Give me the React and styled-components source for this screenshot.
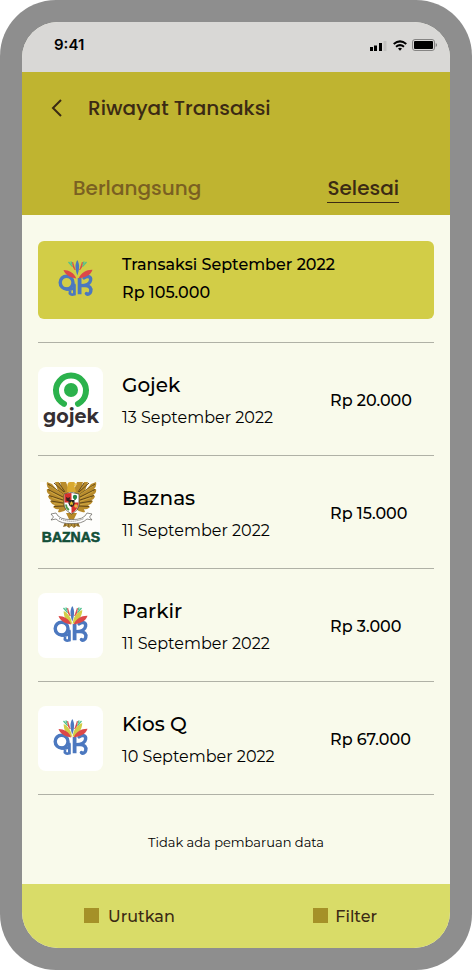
import React, { useState } from "react";
import styled, { createGlobalStyle } from "styled-components";

const GlobalStyle = createGlobalStyle`
  *, *::before, *::after { box-sizing: border-box; }
  body { margin: 0; background: #fff; }
  button { font: inherit; color: inherit; background: none; border: 0; padding: 0; cursor: pointer; }
  h1, h2, p, ul { margin: 0; padding: 0; font-weight: inherit; }
  h1 { font-size: inherit; }
`;

const Device = styled.div`
  display: flex;
  min-height: 100vh;
  padding: 22px;
  border-radius: 56px;
  background: #8e8e8e;
  font-family: Montserrat, Inter, sans-serif;
  color: #000;
`;

const Screen = styled.main`
  flex: 1;
  min-width: 0;
  display: flex;
  flex-direction: column;
  overflow: hidden;
  border-radius: 36px;
  background: #f9faeb;
`;

const StatusBar = styled.div`
  display: flex;
  align-items: center;
  justify-content: space-between;
  height: 50px;
  padding: 0 12px 4px 32px;
  background: #d9d8d6;
`;

const Clock = styled.time`
  font: 600 15px/20px Inter, sans-serif;
`;

const StatusIcons = styled.svg`
  display: block;
  width: 68px;
  height: 14px;
`;

const Header = styled.header`
  display: flex;
  flex-direction: column;
  justify-content: space-between;
  height: 143px;
  padding: 22px 28px 12px;
  background: #bfb430;
  color: #3b2a14;
  font: 500 20px/28px Poppins, Inter, sans-serif;
`;

const TitleRow = styled.div`
  display: flex;
  align-items: center;
  gap: 24px;
`;

const BackButton = styled.button`
  display: grid;
  place-items: center start;
  width: 14px;
  height: 28px;
`;

const Tabs = styled.div`
  display: flex;
  justify-content: space-between;
  padding: 0 23px;
`;

const Tab = styled.button`
  height: 29px;
  border-bottom: 1px solid ${(p) => (p["aria-selected"] ? "#3b2a14" : "transparent")};
  color: ${(p) => (p["aria-selected"] ? "#3b2a14" : "#7a6022")};
`;

const Content = styled.section`
  flex: 1;
  display: flex;
  flex-direction: column;
  padding: 26px 16px 0;
`;

const Summary = styled.section`
  display: flex;
  align-items: center;
  gap: 14px;
  height: 78px;
  padding: 0 5px 2px;
  margin-bottom: 23px;
  border-radius: 6px;
  background: #d2cd47;
  font-size: 16px;
  font-weight: 500;
  line-height: 28px;
`;

const List = styled.ul`
  list-style: none;
  border-top: 1px solid #b0b1a6;
`;

const Row = styled.li`
  display: flex;
  align-items: center;
  padding: 24px 0 23px;
  border-bottom: 1px solid #b0b1a6;
`;

const Logo = styled.svg`
  display: block;
  flex: none;
  width: 65px;
  height: 65px;
  border-radius: 8px;
  background: ${(p) => p.$fill || "transparent"};
`;

const Details = styled.div`
  flex: 1;
  align-self: flex-start;
  display: flex;
  flex-direction: column;
  gap: 7px;
  min-width: 0;
  margin-left: 19px;
  padding-top: 4px;
`;

const Name = styled.h2`
  font-size: 20px;
  font-weight: 500;
  line-height: 28px;
`;

const DateText = styled.p`
  font-size: 16px;
  font-weight: 400;
  line-height: 24px;
`;

const Amount = styled.p`
  width: 104px;
  padding-top: 2px;
  font-size: 16px;
  font-weight: 500;
  line-height: 24px;
  white-space: nowrap;
`;

const Note = styled.p`
  flex: 1;
  display: grid;
  place-items: center;
  padding: 4px 0 0;
  font-size: 13px;
  line-height: 20px;
`;

const Footer = styled.footer`
  display: flex;
  align-items: center;
  justify-content: space-between;
  height: 64px;
  padding: 2px 73px 0 62px;
  background: #d9dc68;
  color: #3b2a14;
`;

const FooterButton = styled.button`
  display: flex;
  align-items: center;
  gap: ${(p) => p.$gap}px;
  font-size: 16px;
  font-weight: 500;
  line-height: 24px;
`;

const Square = styled.span`
  width: 15px;
  height: 15px;
  margin-bottom: 3px;
  background: #a59128;
`;

function QrLogo({ fill }) {
  return (
    <Logo viewBox="0 0 65 65" $fill={fill} aria-hidden="true">
      <g fill="none" stroke="#4c78bf" strokeWidth="3.4" strokeLinecap="round">
        <circle cx="23.6" cy="35.6" r="6.4" />
        <path d="M22 41.500 Q26 43.500 29 42 M31.400 38 V47.200 C28 48.300 26.300 46.800 27 44.800" strokeWidth="2.8" />
        <path d="M36.600 31 V47.300" strokeLinecap="butt" strokeWidth="3.8" />
        <path d="M41 31 C44 28.500 48.300 29.300 47.600 33.200 C47 36.600 44 38.600 38 38.600 H42 C46.500 38.600 48.600 41 47.700 44.500 C47.100 47 44.800 48 43.400 46.500" />
      </g>
      <path d="M34.3 13 C36.8 17 36.6 22 34.3 28.6 C32 22 31.8 17 34.3 13Z" fill="#4c78bf" />
      <path d="M34 31 C28 29 25.5 23.5 25.7 18 C30.5 20.5 33.5 25 34 31Z" fill="#d2cd47" />
      <path d="M34.6 31 C35 25 38 19.5 44.3 17 C44 23.5 40.5 28.5 34.6 31Z" fill="#d2cd47" />
      <path d="M33.3 31.4 C27 31 22.2 27.5 20.5 23 C26 23 31 26 33.3 31.4Z" fill="#dc4848" />
      <path d="M35.5 31.4 C38 26 43.5 22.6 49.5 22.8 C48 28 42 31 35.5 31.4Z" fill="#dc4848" />
      <path d="M29.6 15 L32.2 23 Q29 20 29.6 15Z M39.4 15 L36.6 23 Q40 20 39.4 15Z" fill="#dc4848" stroke="#dc4848" strokeWidth=".6" />
      <path d="M25.5 15 L29.6 19.6 M43.5 15 L39.4 19.6 M27.8 14.4 L29 17 M41.2 14.4 L40 17" stroke="#4fc08d" strokeWidth="1.3" />
    </Logo>
  );
}

function GojekLogo() {
  return (
    <Logo viewBox="0 0 65 65" $fill="#fff" role="img" aria-label="Gojek">
      <path d="M26 36.800 A15 15 0 1 1 40 36.800" fill="none" stroke="#2bb24c" strokeWidth="6" strokeLinecap="round" />
      <circle cx="33" cy="23" r="7" fill="#2bb24c" />
      <text x="33" y="56" textAnchor="middle" fontFamily="Montserrat, Inter, sans-serif" fontWeight="700" fontSize="19" fill="#352f33">gojek</text>
    </Logo>
  );
}

function Wing() {
  return (
    <g>
      <path
        d="M31 10 L28 2 H22 L24 9 L21 2 H17 L20 11 L14 4 L9 2 Q8 6 11 9 L9 9 Q8 13 12 15 L10 16 Q11 20 14 20 L12 21 Q14 25 17 25 L15 27 Q18 30 21 29 L20 32 Q25 33 29 29 Z"
        fill="#b98c2c"
      />
      <path
        d="M10 4 L25 14 M10 9.500 L25 17 M11 15.500 L25 20 M13 21 L25 23 M16 26.500 L26 26 M16 3 L26 12 M21 3 L27 12"
        stroke="#62481a"
        strokeWidth="1"
      />
      <path d="M12 6 L26 15 M12 11.500 L25 18.500 M14 17.500 L25 21.500 M16 23.500 L25 24.700" stroke="#dfba52" strokeWidth=".6" />
    </g>
  );
}

function BaznasLogo() {
  return (
    <Logo viewBox="0 0 65 65" role="img" aria-label="Baznas">
      <rect x="2" y="2" width="60" height="60" fill="#fefefc" />
      <Wing />
      <g transform="matrix(-1 0 0 1 67 0)"><Wing /></g>
      <path d="M29 12 L29.500 4 Q30 2 32 2 H36 Q38 3 38 5 L36.500 6 L38 12 Z" fill="#d9a92f" />
      <path d="M36 3.500 L39.500 4.500 L37 6 Z" fill="#f1cf54" />
      <path d="M28 33 L31 39 L29 47 L33.500 44 L38 47 L36 39 L39 33 Z" fill="#b78927" />
      <path d="M27 42 L25 47 L29 46 L31 48 L33.500 46 L36 48 L38 46 L42 47 L40 42 Z" fill="#8b6923" />
      <path d="M29 42 V46 M32 42 V47 M35 42 V47 M38 42 V46" stroke="#f0cf6b" strokeWidth=".7" />
      <path d="M26 14 Q33.500 11 41 14 V24 Q41 30 33.500 34 Q26 30 26 24 Z" fill="#fff" stroke="#393321" strokeWidth=".7" />
      <path d="M26.500 14.300 Q30 13 33.500 13 V22.500 H26.500 Z" fill="#d62f2b" />
      <path d="M33.500 22.500 H40.500 V24 Q40.500 29 33.500 33.500 Z" fill="#d62f2b" />
      <path d="M28 17 L30 18 L32 17 L31.500 21 H28.500 Z" fill="#3a2020" />
      <path d="M37 20 V17" stroke="#31613c" strokeWidth="1.500" />
      <circle cx="37" cy="17" r="2.200" fill="#258547" />
      <path d="M28 24.500 Q28 28 31 30" stroke="#4b984c" strokeWidth="1.800" fill="none" />
      <circle cx="38" cy="26" r="1.800" fill="#e8b447" />
      <path d="M30.500 20 H36.500 V23.500 Q36 26 33.500 27 Q31 26 30.500 23.500 Z" fill="#252323" />
      <path d="M33.500 21 L34.200 22.600 L36 22.700 L34.600 23.800 L35.100 25.500 L33.500 24.500 L31.900 25.500 L32.400 23.800 L31 22.700 L32.800 22.600Z" fill="#e9c22e" />
      <path
        d="M13 34 L18 33 Q21 40 33.500 39.500 Q46 40 49 33 L54 34 L51.500 37 L54 40 L49 39 Q44 44 33.500 43.500 Q23 44 18 39 L13 40 L15.500 37 Z"
        fill="#fff"
        stroke="#5e5b54"
        strokeWidth=".7"
      />
      <path d="M21 38.500 Q33.500 44 46 38.500" fill="none" stroke="#6b6861" strokeWidth="1" strokeDasharray="1 1" />
      <text x="33" y="62" textAnchor="middle" fontFamily="Liberation Sans, sans-serif" fontWeight="700" fontSize="14" fill="#124f38" stroke="#124f38" strokeWidth=".6">BAZNAS</text>
    </Logo>
  );
}

const transactions = [
  { name: "Gojek", date: "13 September 2022", amount: "Rp 20.000", logo: <GojekLogo /> },
  { name: "Baznas", date: "11 September 2022", amount: "Rp 15.000", logo: <BaznasLogo /> },
  { name: "Parkir", date: "11 September 2022", amount: "Rp 3.000", logo: <QrLogo fill="#fff" /> },
  { name: "Kios Q", date: "10 September 2022", amount: "Rp 67.000", logo: <QrLogo fill="#fff" /> },
];

export default function App() {
  const [tab, setTab] = useState("Selesai");
  return (
    <>
      <GlobalStyle />
      <Device>
        <Screen>
          <StatusBar>
            <Clock>9:41</Clock>
            <StatusIcons viewBox="0 0 68 14" aria-hidden="true">
              <path d="M0 9h3v4H0z M4 7.500h3V13H4z M9 5h3v8H9z" />
              <path d="M13.500 3h3v10h-3z" fill="#c4c3c1" />
              <g fill="none" stroke="#000" strokeWidth="2">
                <path d="M23.700 6 Q30 .8 36.300 6" />
                <path d="M26 8.700 Q30 5.500 34 8.700" />
              </g>
              <path d="M28 10.500 Q30 9 32 10.500 L30 12.800 Z" />
              <rect x="42.500" y="1.500" width="22" height="11" rx="2.500" fill="none" stroke="#858483" />
              <rect x="44" y="3" width="19" height="8" rx="1" />
              <path d="M66 5.500 Q67.500 7 66 8.500Z" fill="#777" stroke="#777" strokeWidth=".5" />
            </StatusIcons>
          </StatusBar>

          <Header>
            <TitleRow>
              <BackButton aria-label="Kembali">
                <svg width="14" height="18" viewBox="0 0 14 18" fill="none" stroke="#3b2a14" strokeWidth="2">
                  <path d="M11 1 L3 9 L11 17" />
                </svg>
              </BackButton>
              <h1>Riwayat Transaksi</h1>
            </TitleRow>
            <Tabs role="tablist">
              {["Berlangsung", "Selesai"].map((label) => (
                <Tab key={label} role="tab" aria-selected={tab === label} onClick={() => setTab(label)}>
                  {label}
                </Tab>
              ))}
            </Tabs>
          </Header>

          <Content>
            <Summary>
              <QrLogo />
              <div>
                <p>Transaksi September 2022</p>
                <p>Rp 105.000</p>
              </div>
            </Summary>
            <List>
              {transactions.map((t) => (
                <Row key={t.name}>
                  {t.logo}
                  <Details>
                    <Name>{t.name}</Name>
                    <DateText>{t.date}</DateText>
                  </Details>
                  <Amount>{t.amount}</Amount>
                </Row>
              ))}
            </List>
            <Note>Tidak ada pembaruan data</Note>
          </Content>

          <Footer>
            <FooterButton $gap={9}><Square />Urutkan</FooterButton>
            <FooterButton $gap={7}><Square />Filter</FooterButton>
          </Footer>
        </Screen>
      </Device>
    </>
  );
}
